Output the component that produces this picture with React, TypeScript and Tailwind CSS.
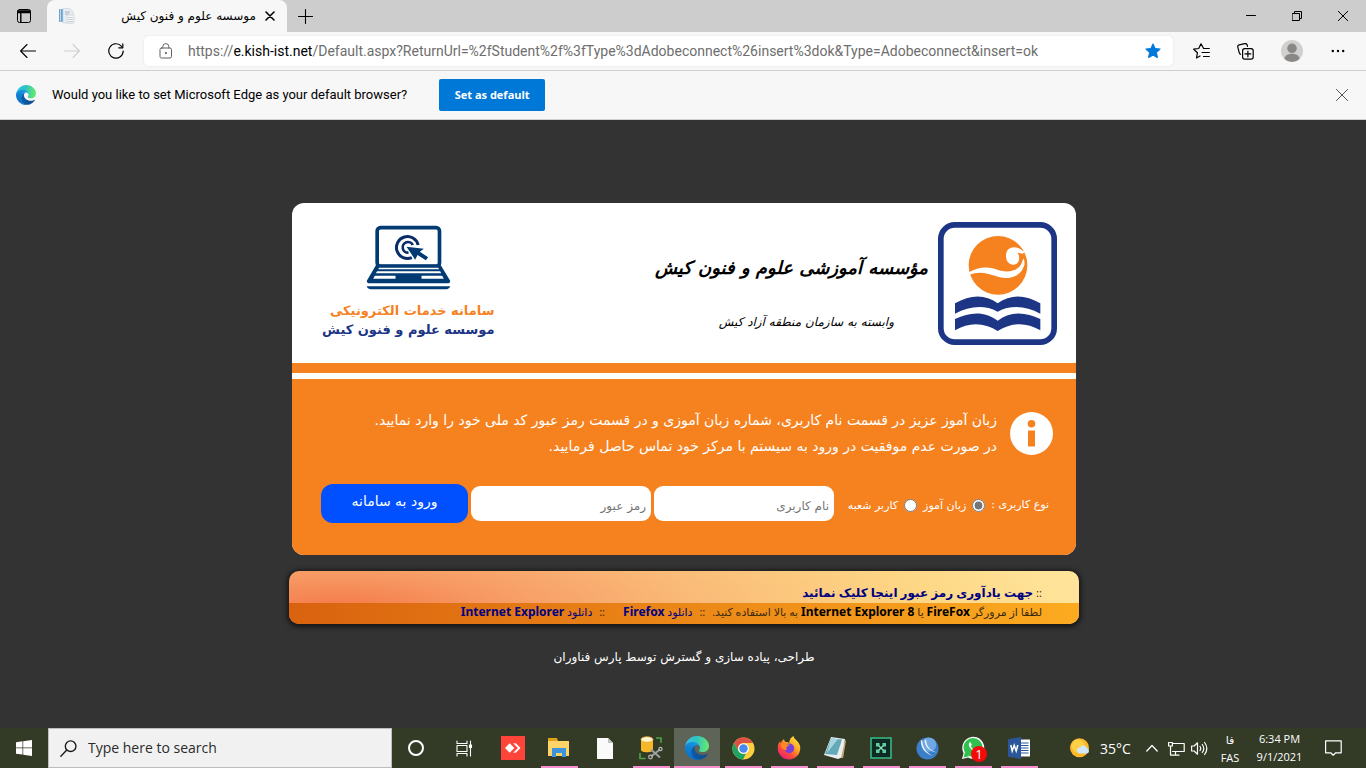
import type { ReactNode } from "react";

const latin = "font-['Open_Sans','DejaVu_Sans',sans-serif]";
const farsi = "font-['DejaVu_Sans',sans-serif]";

function EdgeLogo({ id, className }: { id: string; className: string }) {
  return (
    <svg viewBox="0 0 256 256" className={className} aria-hidden="true">
      <defs>
        <linearGradient id={`${id}-a`} x1="0.2" y1="0.5" x2="1" y2="0.5">
          <stop offset="0" stopColor="#0c59a4" />
          <stop offset="1" stopColor="#114a8b" />
        </linearGradient>
        <linearGradient id={`${id}-b`} x1="0.6" y1="0" x2="0.2" y2="1">
          <stop offset="0" stopColor="#1b9de2" />
          <stop offset="0.5" stopColor="#0f7fd2" />
          <stop offset="1" stopColor="#0a6cc4" />
        </linearGradient>
        <linearGradient id={`${id}-c`} x1="0" y1="0.4" x2="1" y2="0.5">
          <stop offset="0" stopColor="#35c1f1" />
          <stop offset="0.45" stopColor="#2fc3c0" />
          <stop offset="1" stopColor="#66eb6e" />
        </linearGradient>
      </defs>
      <path fill={`url(#${id}-a)`} d="M235.68 190.38a91.6 91.6 0 0 1-10.54 4.71 101.9 101.9 0 0 1-35.9 6.46c-47.32 0-88.54-32.55-88.54-74.32A31.48 31.48 0 0 1 117.13 100c-42.8 1.8-53.8 46.4-53.8 72.53 0 73.88 68.09 81.37 82.76 81.37 7.91 0 19.84-2.3 27-4.56l1.31-.44a128.34 128.34 0 0 0 66.6-52.8 4 4 0 0 0-5.32-5.72z" />
      <path fill={`url(#${id}-b)`} d="M105.73 241.42A79.2 79.2 0 0 1 83 220.08a80.72 80.72 0 0 1 29.53-120c3.12-1.47 8.45-4.13 15.54-4a32.35 32.35 0 0 1 25.69 13 31.88 31.88 0 0 1 6.36 18.66c0-.21 24.46-79.6-80-79.6C36.2 48.14.12 89.8.12 126.38a130.18 130.18 0 0 0 12.11 56 128 128 0 0 0 156.38 67.11 75.55 75.55 0 0 1-62.78-8z" />
      <path fill={`url(#${id}-c)`} d="M152.33 148.86c-.81 1.05-3.3 2.5-3.3 5.66 0 2.61 1.7 5.12 4.72 7.23 14.38 10 41.49 8.68 41.56 8.68a59.56 59.56 0 0 0 30.27-8.35A61.38 61.38 0 0 0 256 109.22c.26-22.41-8-37.31-11.34-43.91C223.46 23.84 177.72 0 128 0A128 128 0 0 0 0 126.2c.48-36.54 36.8-66.05 80-66.05 3.5 0 23.46.34 42 10.07 16.34 8.58 24.9 18.94 30.85 29.21 6.18 10.67 7.28 24.15 7.28 29.52 0 5.37-2.74 13.33-7.8 19.91z" />
    </svg>
  );
}

function Line({ children, className = "size-4", box = "0 0 16 16", width = 1 }: { children: ReactNode; className?: string; box?: string; width?: number }) {
  return (
    <svg viewBox={box} className={className} fill="none" stroke="currentColor" strokeWidth={width} strokeLinecap="round" strokeLinejoin="round" aria-hidden="true">
      {children}
    </svg>
  );
}

function TabStrip() {
  return (
    <header className="flex h-8 items-stretch bg-[#cdcdcd] text-black">
      <button aria-label="Tab actions" className="flex w-[47px] items-center justify-center">
        <Line box="0 0 14 14" className="size-3.5">
          <rect x="0.5" y="0.5" width="13" height="13" rx="2" />
          <path d="M1 2h12M1 3.500h12M3.800 4v9" strokeWidth="1.4" />
        </Line>
      </button>
      <div className="flex w-60 items-center rounded-t-lg bg-[#f7f7f7] pr-[11px] pl-3">
        <svg viewBox="0 0 16 16" className="size-4" aria-hidden="true">
          <path d="M0 1h4v13H0z" fill="#6aa5d4" />
          <path d="M1 1h1v13H1z" fill="#b8d6ec" />
          <path d="M4 .5h7l3 3V15H4z" fill="#e9edf2" stroke="#c8d0d9" strokeWidth=".6" />
          <path d="M6 4h5M6 6h4" stroke="#a7b3bf" />
          <path d="M8 7h7v8H8z" fill="#f6f8fa" stroke="#c0c9d3" strokeWidth=".6" />
          <path d="M9 9.500h5M9 11.500h5M9 13.500h5" stroke="#bac4cf" strokeWidth=".8" />
        </svg>
        <span dir="rtl" className={`${farsi} ml-auto pr-2 text-[12px] leading-4 whitespace-nowrap`}>موسسه علوم و فنون کیش</span>
        <button aria-label="Close tab" className="flex size-3 items-center justify-center">
          <Line box="0 0 10 10" className="size-2.5" width={1.6}><path d="M1 1l8 8M9 1L1 9" /></Line>
        </button>
      </div>
      <button aria-label="New tab" className="flex w-9 items-center justify-center">
        <Line box="0 0 15 15" className="size-[15px]" width={1.1}><path d="M7.500 .5v14M.5 7.500h14" /></Line>
      </button>
      <div className="ml-auto flex">
        <button aria-label="Minimize" className="flex w-[46px] items-center justify-center">
          <Line box="0 0 10 10" className="size-2.5"><path d="M.5 4.500h9" /></Line>
        </button>
        <button aria-label="Restore" className="flex w-[46px] items-center justify-center">
          <Line box="0 0 10 10" className="size-2.5"><path d="M.5 2.500h7v7h-7zM2.500 2.500v-2h7v7h-2" /></Line>
        </button>
        <button aria-label="Close window" className="flex w-[46px] items-center justify-center">
          <Line box="0 0 10 10" className="size-2.5"><path d="M.3 .3l9.400 9.400M9.700 .3L.3 9.700" /></Line>
        </button>
      </div>
    </header>
  );
}

const host = "e.kish-ist.net";
const path = "/Default.aspx?ReturnUrl=%2fStudent%2f%3fType%3dAdobeconnect%26insert%3dok&Type=Adobeconnect&insert=ok";

function Toolbar() {
  return (
    <nav className="flex h-[39px] items-center gap-7 border-b border-[#cfcfcf] bg-[#f7f7f7] px-5 text-black">
      <button aria-label="Back"><Line width={1.1}><path d="M15.500 8H.8M7 1.500L.6 8 7 14.500" /></Line></button>
      <button aria-label="Forward" className="text-[#cfcfcf]"><Line width={1.1}><path d="M.5 8h14.700M9 1.500L15.400 8 9 14.500" /></Line></button>
      <button aria-label="Refresh">
        <Line width={1.2}><path d="M13.500 3.300A7.200 7.200 0 1 0 15.200 8M14.800 .8v4h-4" /></Line>
      </button>
      <div className="-ml-2 flex h-[30px] min-w-0 flex-1 items-center rounded-[5px] bg-white pr-3 pl-3.5 shadow-[0_0_3px_rgba(0,0,0,0.08)]">
        <Line className="size-4 shrink-0 text-[#616161]">
          <rect x="2" y="5" width="11.500" height="10" rx="1.500" />
          <path d="M4.800 5V3.600a3 3 0 0 1 6 0V5" />
          <circle cx="7.800" cy="10" r=".6" fill="currentColor" />
        </Line>
        <div className="relative ml-3.5 min-w-0 flex-1 overflow-hidden font-[Roboto,sans-serif] text-[14px] leading-5 whitespace-nowrap text-[#6e6e6e]">
          https://<span className="text-black">{host}</span>{path}
          <input type="text" aria-label="Address" className="absolute inset-0 w-full bg-transparent" />
        </div>
        <button aria-label="Edit favorite">
          <svg viewBox="0 0 16 16" className="size-4" aria-hidden="true">
            <path d="M8 .8l2.200 4.700 5.100.6-3.800 3.500 1 5.100L8 12.200l-4.500 2.500 1-5.100L.7 6.100l5.100-.6z" fill="#0078d7" stroke="#0078d7" strokeLinejoin="round" />
          </svg>
        </button>
      </div>
      <div className="-ml-2 flex items-center gap-[27px]">
        <button aria-label="Favorites">
          <Line box="0 0 17 16" className="h-4 w-[17px]" width={1.2}>
            <path d="M10.500 5.200L8 .8 5.700 5.500.7 6.200l3.700 3.600L3.500 15l3.500-2M10.500 5.500h5.800M9 9.500h7.300M10.500 13.500h5.800" />
          </Line>
        </button>
        <button aria-label="Collections">
          <Line box="0 0 17 17" className="size-[17px]" width={1.2}>
            <path d="M3.600 11.300a2 2 0 0 1-1.300-1.400L.8 4.200a2 2 0 0 1 1.400-2.400L7.800.6a2 2 0 0 1 2.300 1.200l.4 1.600" />
            <rect x="5.600" y="5.600" width="10.600" height="10.600" rx="2.200" />
            <path d="M10.900 8v5.800M8 10.900h5.800" />
          </Line>
        </button>
        <button aria-label="Profile">
          <svg viewBox="0 0 22 22" className="size-[22px]" aria-hidden="true">
            <circle cx="11" cy="11" r="11" fill="#d2d0ce" />
            <circle cx="11" cy="8.300" r="4.800" fill="#8a8886" />
            <path d="M3.500 19c0-7 15-7 15 0a11 11 0 0 1-15 0z" fill="#8a8886" />
          </svg>
        </button>
        <button aria-label="Settings and more">
          <svg viewBox="0 0 16 16" className="size-4" aria-hidden="true">
            <circle cx="2.800" cy="8" r="1.200" /><circle cx="8" cy="8" r="1.200" /><circle cx="13.200" cy="8" r="1.200" />
          </svg>
        </button>
      </div>
    </nav>
  );
}

function DefaultBrowserBar() {
  return (
    <aside className="flex h-[49px] items-center border-b border-[#cfcfcf] bg-[#f7f7f7] pr-[18px] pl-4 font-[Roboto,sans-serif] text-black">
      <EdgeLogo id="bar" className="size-5" />
      <p className="ml-4 text-[13px] leading-5 whitespace-nowrap">Would you like to set Microsoft Edge as your default browser?</p>
      <button className="ml-8 h-8 w-[106px] rounded-[2px] bg-[#0078d7] font-['Open_Sans',sans-serif] text-[11px] font-bold whitespace-nowrap text-white">Set as default</button>
      <button aria-label="Dismiss" className="ml-auto text-[#555]">
        <Line box="0 0 12 12" className="size-3"><path d="M.4 .4l11.200 11.200M11.600 .4L.4 11.600" /></Line>
      </button>
    </aside>
  );
}

function Emblem() {
  return (
    <svg viewBox="894 66 357 369" className="h-[123px] w-[119px] shrink-0" role="img" aria-label="Kish institute emblem">
      <rect x="902.500" y="74.500" width="340" height="352" rx="42" fill="#fff" stroke="#1c3585" strokeWidth="17" />
      <circle cx="1074" cy="196" r="88" fill="#f6821f" />
      <path d="M984 218c30-17 58-20 88-9 34 12 68 3 75-26l5-8 2 18c-10 36-42 48-80 37-32-10-58-18-87-5z" fill="#fff" />
      <path d="M1098 168c0-18 11-26 24-26 13 0 20 6 32 14l-6 5-15-3c9 16 5 36-13 36-13 0-22-11-22-26z" fill="#fff" />
      <path d="M945 310c45-26 90-29 128 0 40-29 84-26 128 0v31c-43-23-87-27-128-6-40-21-84-17-128 6z" fill="#1c3585" />
      <path d="M945 357c45-21 88-25 128 5 40-30 84-26 128-5v34c-43-26-87-24-128 2-41-26-86-27-128-2z" fill="#1c3585" />
    </svg>
  );
}

function Laptop() {
  return (
    <svg viewBox="210 73 254 198" className="h-[66px] w-[85px]" aria-hidden="true">
      <rect x="243" y="81" width="187" height="115" rx="10" fill="#fff" stroke="#023a73" strokeWidth="11" />
      <path d="M240 192h193l29 48q0 8-8 8H220q-8 0-8-8z" fill="#023a73" />
      <path d="M249 201h177l3 5H246zM243 212h189l3 6H239zM236 225h62v9h-67zM376 225h62l5 9h-67z" fill="#fff" />
      <path d="M212 257h250q-2 8-12 9H225q-12-1-13-9z" fill="#023a73" />
      <path d="M366 133A33 33 0 1 0 347 171" fill="none" stroke="#0a2d68" strokeWidth="9" />
      <path d="M350 133a16 16 0 1 0-13 23" fill="none" stroke="#0a2d68" strokeWidth="8" />
      <path d="M331 138l52 6-12 9 25 17-7 9-25-16-7 14z" fill="#023a73" />
    </svg>
  );
}

function LoginCard() {
  const field = "h-[35px] w-[180px] min-w-0 rounded-[9px] bg-white px-[5px] pt-1 text-[12px] text-black placeholder:text-[#757575]";
  return (
    <main className="w-full max-w-[784px] overflow-hidden rounded-xl bg-white">
      <div className="flex h-40 items-start justify-between pr-[19px] pl-[30px]">
        <div className="flex flex-col items-center pt-[22px]">
          <Laptop />
          <p dir="rtl" className={`${farsi} mt-2.5 w-full text-right text-[13px] leading-[19px] font-bold whitespace-nowrap`}>
            <span className="block text-[#f6821f]">سامانه خدمات الکترونیکی</span>
            <span className="block text-[#1c3585]">موسسه علوم و فنون کیش</span>
          </p>
        </div>
        <div className="flex gap-2.5 pt-[19px]">
          <div dir="rtl" className={`${farsi} pt-6 text-black`}>
            <h1 className="text-[18px] leading-[44px] font-bold whitespace-nowrap italic">مؤسسه آموزشی علوم و فنون کیش</h1>
            <p className="pt-2.5 pr-[34px] text-[12px] leading-[44px] whitespace-nowrap italic">وابسته به سازمان منطقه آزاد کیش</p>
          </div>
          <Emblem />
        </div>
      </div>
      <div className="h-2.5 bg-[#f6821f]" />
      <div className="h-1.5" />
      <div dir="rtl" className={`${farsi} h-44 bg-[#f6821f] pr-[23px] pl-[29px] text-white`}>
        <div className="flex gap-[13px] pt-7">
          <svg viewBox="0 0 43 43" className="mt-[5px] size-[43px] shrink-0" aria-hidden="true">
            <circle cx="21.500" cy="21.500" r="21.500" fill="#fff" />
            <circle cx="21.500" cy="11.800" r="3.800" fill="#f6821f" />
            <path d="M18 18.500h7V34.500h-7z" fill="#f6821f" />
          </svg>
          <p className="text-[14px] leading-[26px] whitespace-nowrap">
            زبان آموز عزیز در قسمت نام کاربری، شماره زبان آموزی و در قسمت رمز عبور کد ملی خود را وارد نمایید.
            <br />
            در صورت عدم موفقیت در ورود به سیستم با مرکز خود تماس حاصل فرمایید.
          </p>
        </div>
        <form className="flex items-center gap-[3px] pt-[25px] pr-1" onSubmit={(e) => e.preventDefault()}>
          <fieldset className="ml-auto flex items-center pt-1 text-[11px] whitespace-nowrap">
            <legend className="float-right pl-1.5">نوع کاربری :</legend>
            <input id="learner" name="kind" type="radio" defaultChecked className="size-[13px] accent-[#767676]" />
            <label htmlFor="learner" className="pt-0.5 pr-1.5 pl-1.5">زبان آموز</label>
            <input id="branch" name="kind" type="radio" className="size-[13px] accent-[#767676]" />
            <label htmlFor="branch" className="pt-0.5 pr-1.5">کاربر شعبه</label>
          </fieldset>
          <input type="text" aria-label="نام کاربری" placeholder="نام کاربری" className={field} />
          <input type="password" aria-label="رمز عبور" placeholder="رمز عبور" className={field} />
          <button className="h-[39px] w-[147px] rounded-xl bg-[#0050ff] pb-1 text-[14px] whitespace-nowrap">ورود به سامانه</button>
        </form>
      </div>
    </main>
  );
}

function HelpBar() {
  return (
    <section
      dir="rtl"
      className="mt-4 w-full max-w-[790px] overflow-hidden rounded-[10px] bg-[radial-gradient(720px_150px_at_50px_36px,#f47b4a_0%,#f79a64_22%,#fabb78_50%,#fdd684_80%,#ffe398_100%)] font-['Noto_Sans','DejaVu_Sans',sans-serif] text-[11px] text-[#3a2a10] shadow-[0_1px_5px_2px_rgba(0,0,0,0.6)]"
    >
      <p className="flex h-8 items-end pr-[37px] pb-0.5 leading-4">
        <span>::&nbsp;</span>
        <a href="#reset" className="text-[12px] font-bold whitespace-nowrap text-[#000080]">جهت یادآوری رمز عبور اینجا کلیک نمائید</a>
      </p>
      <p className="h-[21px] bg-linear-to-l from-[#fcab20] to-[#d9620f] pr-[37px] leading-[18px] whitespace-nowrap">
        لطفا از مرورگر <b className="text-[12px] text-black">FireFox</b> یا <b className="text-[12px] text-black">Internet Explorer 8</b> به بالا استفاده کنید.{" "}
        <span className="px-1">::</span>{" "}
        <a href="#firefox" className="text-[#000080]">دانلود <b className="text-[12px]">Firefox</b></a>
        <span className="pr-[18px] pl-1">:: </span>
        <a href="#explorer" className="text-[#000080]">دانلود <b className="text-[12px]">Internet Explorer</b></a>
      </p>
    </section>
  );
}

function TaskButton({ label, children, running = false, active = false, wide = false }: { label: string; children?: ReactNode; running?: boolean; active?: boolean; wide?: boolean }) {
  return (
    <button aria-label={label} className={`flex flex-col items-center ${wide ? "w-12" : "w-[46px]"} ${active ? "bg-[#5f6458]" : ""}`}>
      <span className="flex flex-1 items-center justify-center pt-0.5">{children}</span>
      <span className={`h-0.5 ${active ? "w-full" : "w-[37px]"} ${running || active ? "bg-[#f78fcf]" : ""}`} />
    </button>
  );
}

function Taskbar() {
  return (
    <footer className={`${latin} flex h-10 shrink-0 items-stretch bg-[#333b27] text-white`}>
      <button aria-label="Start" className="flex w-12 items-center justify-center">
        <svg viewBox="0 0 16 16" className="size-4" fill="#fff" aria-hidden="true">
          <path d="M0 2.200l6.500-.9v6.300H0zM7.200 1.200L16 0v7.600H7.200zM0 8.300h6.500v6.300L0 13.700zM7.200 8.300H16V16l-8.800-1.300z" />
        </svg>
      </button>
      <label className="flex w-[344px] items-center gap-[11px] border border-[#bdbdbd] bg-[#f1f1f1] pl-[11px] text-[#1b1b1b]">
        <Line width={1.3} className="size-[17px]"><circle cx="10" cy="5.800" r="5" /><path d="M6.400 9.400L.8 15.200" /></Line>
        <input aria-label="Search" placeholder="Type here to search" className="min-w-0 flex-1 bg-transparent text-[14px] leading-5 placeholder:text-[#2b2b2b]" />
      </label>
      <TaskButton label="Cortana" wide>
        <Line width={2}><circle cx="8" cy="8" r="7" /></Line>
      </TaskButton>
      <TaskButton label="Task view" wide>
        <Line className="size-[17px]" width={1.1} box="0 0 17 16">
          <path d="M1 .5v2.500h10V.5M1 15.500V13h10v2.500M1 5h10v6H1zM14.500 .5v15" />
          <rect x="13.500" y="4.500" width="2" height="2.500" fill="currentColor" />
        </Line>
      </TaskButton>
      <div className="flex pl-0.5">
        <TaskButton label="AnyDesk">
          <svg viewBox="0 0 24 24" className="size-6"><path fill="#ff443a" d="M0 0h24v24H0z" /><path fill="#fff" d="M4 12l4.700-4.700 4.700 4.700-4.700 4.700zM12.200 7.300h2.600l4.700 4.700-4.700 4.700h-2.600l4.700-4.700z" /></svg>
        </TaskButton>
        <TaskButton label="File Explorer" running>
          <svg viewBox="0 0 22 20" className="h-5 w-[22px]"><path fill="#e0a21b" d="M0 0h9l1 3H0z" /><path fill="#fed368" d="M0 3h21v15H0z" /><path fill="#3b94dc" d="M4 10h14v9h-4v-4H8v4H4z" /></svg>
        </TaskButton>
        <TaskButton label="Document">
          <svg viewBox="0 0 16 21" className="h-[21px] w-4"><path fill="#fafafa" d="M0 0h11l5 5v16H0z" /><path fill="#c2c2c2" d="M11 0l5 5h-5z" /></svg>
        </TaskButton>
        <TaskButton label="Database tools" running>
          <svg viewBox="0 0 24 24" className="size-6"><path fill="#f6b828" d="M2 3v11c0 3 12 3 12 0V3z" /><ellipse cx="8" cy="3.500" rx="6" ry="2.800" fill="#fff2ce" stroke="#e6a821" strokeWidth=".7" /><path d="M17 2h5v5M1 17v5.500h5.500" fill="none" stroke="#4aa54a" strokeWidth="1.600" /><path d="M12 20.500l9-7M12 13.500l9 8" stroke="#9aa09d" strokeWidth="2" /><circle cx="11.500" cy="21" r="1.800" fill="none" stroke="#b6bbb8" strokeWidth="1.200" /><circle cx="21.500" cy="13" r="1.600" fill="none" stroke="#b6bbb8" strokeWidth="1.200" /></svg>
        </TaskButton>
        <TaskButton label="Microsoft Edge" active><EdgeLogo id="task" className="size-6" /></TaskButton>
        <TaskButton label="Chrome" running>
          <svg viewBox="0 0 24 24" className="size-[23px]"><circle cx="12" cy="12" r="11.500" fill="#ffcd40" /><path fill="#dd5144" d="M2 6.300A11.500 11.500 0 0 1 22 6.300H12A5.700 5.700 0 0 0 7 14.800z" /><path fill="#1da362" d="M2 6.300l5 8.500a5.700 5.700 0 0 0 7.500 2.300l-3 6.400A11.500 11.500 0 0 1 2 6.300z" /><circle cx="12" cy="12" r="5.600" fill="#fff" /><circle cx="12" cy="12" r="4.400" fill="#4688f4" /></svg>
        </TaskButton>
        <TaskButton label="Firefox" running>
          <svg viewBox="0 0 24 24" className="size-6">
            <defs>
              <linearGradient id="fox" x1="0.85" y1="0.05" x2="0.2" y2="0.95"><stop offset="0" stopColor="#ffe53e" /><stop offset=".4" stopColor="#ffa022" /><stop offset=".7" stopColor="#ff4a3c" /><stop offset="1" stopColor="#e81f78" /></linearGradient>
            </defs>
            <path fill="url(#fox)" d="M12 23.500A11.300 11.300 0 0 1 .7 12.500C.7 9 1.700 6.800 3.200 5c0 1.200.2 1.800.7 2.300.8-2.200 2-3.500 3.200-4.200 0 1.400.6 2.300 1.600 2.900 1.400-.2 2.700.2 3.500 1 .1-3 1.600-5.800 4.300-7 .2 3 5.400 5.200 6.500 10C24.500 16.800 19.200 23.500 12 23.500z" />
            <circle cx="12.300" cy="12.300" r="4.900" fill="#7a3fd8" />
            <path fill="#ff8a24" d="M4 8.500c2-1.300 4-1.300 5.500-.2 1.400-.3 2.800.1 3.500.8-1.800.2-2.300 1.300-3.300 2-.7.500-.6 1.800.2 3-3 .2-6.400-2-5.900-5.600z" />
          </svg>
        </TaskButton>
        <TaskButton label="Notepad" running>
          <svg viewBox="0 0 24 24" className="size-6"><path fill="#e9eef0" d="M8 1l14 2-2 18-5 2L1 19z" /><path fill="#c6a76b" d="M18 22l4-18 1 1-3 17z" /><path fill="#64a9b8" d="M8 2.500l11 1-5 15.500-12-1z" /><path fill="#a9d5de" d="M8 2.500l7 .6L4 17z" /></svg>
        </TaskButton>
        <TaskButton label="X app" running>
          <svg viewBox="0 0 22 22" className="size-[22px]"><path fill="#0d2b23" stroke="#3bbd8c" strokeWidth="1.500" d="M1 1h20v20H1z" /><path d="M7 7l8 8M15 7l-8 8" stroke="#8fe3bd" strokeWidth="1.300" /><path d="M6 6h3.500v3.500H6zM12.500 6H16v3.500h-3.500zM6 12.500h3.500V16H6zM12.500 12.500H16V16h-3.500z" fill="#62cfa2" /></svg>
        </TaskButton>
        <TaskButton label="Blue globe" running>
          <svg viewBox="0 0 24 24" className="size-[23px]"><circle cx="12" cy="12" r="11.500" fill="#3b7fc8" /><circle cx="13.500" cy="8" r="7.500" fill="#6fa8e2" /><path d="M5 4c0 9 6 15 15 16-8-2-13-8-13.500-17zM9 3c0 7 5 12 13 13-7-2-11-6-11.500-13.500z" fill="#e4effb" /></svg>
        </TaskButton>
        <TaskButton label="WhatsApp" running>
          <span className="relative flex size-6 items-center">
            <svg viewBox="0 0 24 24" className="size-6">
              <path d="M1 23l1.600-6A11 11 0 1 1 7 21.400z" fill="#fff" />
              <circle cx="12" cy="11.500" r="9.500" fill="#2fc04d" />
              <path d="M2.500 21.500L4 16l4 4.200z" fill="#2fc04d" />
              <path d="M8.500 6.500c-3 3 4 10.500 7.500 9.500 2-1 1.500-2 1-2.300l-2-1c-.8 0-.8 1.500-1.600 1.200-1.500-.7-3-2.200-3.500-3.600 0-.7 1-.8.800-1.800l-.8-1.800c-.2-.5-1-.5-1.400-.2z" fill="#fff" />
            </svg>
            <span className="absolute top-2.5 left-2.5 flex size-4 items-center justify-center rounded-full bg-[#f50a0a] text-[13px] leading-4">1</span>
          </span>
        </TaskButton>
        <TaskButton label="Word" running>
          <svg viewBox="0 0 22 22" className="size-[22px]"><path fill="#fff" d="M12 2.500h10v17H12z" /><path d="M13 6h7.500M13 8.500h7.500M13 11h7.500M13 13.500h7.500M13 16h7.500" stroke="#2b579a" /><path fill="#2b579a" d="M0 2.200L13 0v22L0 19.800z" /><path d="M2.800 8l1.400 6 2-5.800 2 5.800L9.800 8" stroke="#fff" strokeWidth="1.500" fill="none" /></svg>
        </TaskButton>
      </div>
      <div className="ml-auto flex items-center">
        <svg viewBox="0 0 20 20" className="size-5" aria-hidden="true"><circle cx="9.500" cy="9.800" r="9.500" fill="#fdb927" /><circle cx="8" cy="8" r="6.500" fill="#fed047" /><path d="M10 15.500a3 3 0 0 1 0-6 3.800 3.800 0 0 1 7 .8 2.700 2.700 0 0 1 0 5.200z" fill="#cfe8fb" /></svg>
        <span className="ml-2.5 w-[30px] text-[14px] whitespace-nowrap">35°C</span>
        <button aria-label="Show hidden icons" className="ml-4"><Line box="0 0 12 8" className="h-2 w-3" width={1.3}><path d="M.8 7L6 1.500 11.200 7" /></Line></button>
        <button aria-label="Network" className="ml-2.5">
          <Line box="0 0 17 15" className="h-[15px] w-[17px]" width={1.2}><path d="M4.500 2.500h11.700v8H4.500M3 14.200h8M7.500 10.500v3.500M.6 1.500h3.800v3.500H.6zM2.500 5v9" /></Line>
        </button>
        <button aria-label="Volume" className="ml-1.5">
          <Line box="0 0 17 15" className="h-[15px] w-[17px]" width={1.2}><path d="M.6 5h2.500L6.500 1.800v11.400L3.100 10H.6zM9 5.500q1.500 2 0 4M11.300 3.500q3 4 0 8M13.600 1.500q4.500 6 0 12" /></Line>
        </button>
        <button className="ml-3 w-5 text-center text-[11px] leading-[17px]"><span className={farsi}>فا</span><br />FAS</button>
        <p className="ml-3 w-[55px] text-center text-[11px] leading-[18px] whitespace-nowrap">6:34 PM<br />9/1/2021</p>
        <button aria-label="Notifications" className="mr-6 ml-[18px]">
          <Line box="0 0 17 16" className="h-4 w-[17px]" width={1.2}><path d="M.6 .8h15.600v12h-5.500L8.200 15.200 5.700 12.800H.6z" /></Line>
        </button>
      </div>
    </footer>
  );
}

export default function App() {
  return (
    <div className="flex min-h-screen flex-col bg-[#333]">
      <TabStrip />
      <Toolbar />
      <DefaultBrowserBar />
      <div className="flex flex-1 flex-col items-center pt-[83px] pb-8 pl-0.5">
        <LoginCard />
        <HelpBar />
        <p dir="rtl" className={`${farsi} mt-6 text-[12px] leading-[18px] text-white`}>طراحی، پیاده سازی و گسترش توسط پارس فناوران</p>
      </div>
      <Taskbar />
    </div>
  );
}
